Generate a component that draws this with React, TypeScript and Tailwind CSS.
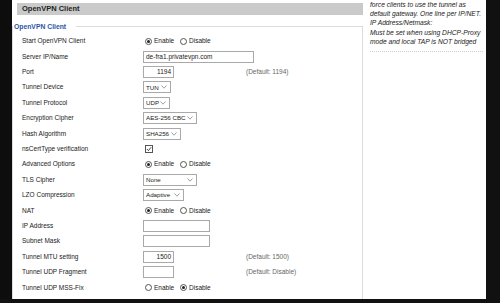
import type { ReactNode } from 'react'

function Radio({ checked }: { checked?: boolean }) {
  return (
    <span className="inline-flex h-[7px] w-[7px] items-center justify-center rounded-full border border-[#555] bg-white">
      {checked && <span className="h-[3px] w-[3px] rounded-full bg-[#222]" />}
    </span>
  )
}

function RadioPair({ on }: { on: boolean }) {
  return (
    <div className="flex items-center pl-[2px]">
      <Radio checked={on} />
      <span className="ml-[2px] w-[26px]">Enable</span>
      <Radio checked={!on} />
      <span className="ml-[2px]">Disable</span>
    </div>
  )
}

function Input({ w, value, right }: { w: string; value?: string; right?: boolean }) {
  return (
    <div
      className={`flex h-[12px] items-center whitespace-nowrap border border-[#a9a9a9] bg-white px-[2px] ${w} ${
        right ? 'justify-end' : ''
      }`}
    >
      {value}
    </div>
  )
}

function Select({ w, value }: { w: string; value: string }) {
  return (
    <div
      className={`flex h-[12px] items-center justify-between overflow-hidden whitespace-nowrap border border-[#a9a9a9] bg-white pl-[2px] pr-[3px] ${w}`}
    >
      <span className="text-[6.2px]">{value}</span>
      <svg width="6" height="4" viewBox="0 0 6 4" className="shrink-0">
        <polyline points="0.5,0.5 3,3.2 5.5,0.5" fill="none" stroke="#888" strokeWidth="0.8" />
      </svg>
    </div>
  )
}

function Checkbox() {
  return (
    <div className="ml-[2px] flex h-[8px] w-[8px] items-center justify-center border border-[#555] bg-white">
      <svg width="6" height="6" viewBox="0 0 6 6">
        <polyline points="0.8,3 2.4,4.6 5.2,1.2" fill="none" stroke="#333" strokeWidth="0.9" />
      </svg>
    </div>
  )
}

type Row = { label: string; control: ReactNode; note?: string }

const rows: Row[] = [
  { label: 'Start OpenVPN Client', control: <RadioPair on /> },
  { label: 'Server IP/Name', control: <Input w="w-[111px]" value="de-fra1.privatevpn.com" /> },
  { label: 'Port', control: <Input w="w-[31px]" value="1194" right />, note: '(Default: 1194)' },
  { label: 'Tunnel Device', control: <Select w="w-[28px]" value="TUN" /> },
  { label: 'Tunnel Protocol', control: <Select w="w-[27px]" value="UDP" /> },
  { label: 'Encryption Cipher', control: <Select w="w-[54px]" value="AES-256 CBC" /> },
  { label: 'Hash Algorithm', control: <Select w="w-[38px]" value="SHA256" /> },
  { label: 'nsCertType verification', control: <Checkbox /> },
  { label: 'Advanced Options', control: <RadioPair on /> },
  { label: 'TLS Cipher', control: <Select w="w-[54px]" value="None" /> },
  { label: 'LZO Compression', control: <Select w="w-[41px]" value="Adaptive" /> },
  { label: 'NAT', control: <RadioPair on /> },
  { label: 'IP Address', control: <Input w="w-[67px]" /> },
  { label: 'Subnet Mask', control: <Input w="w-[67px]" /> },
  { label: 'Tunnel MTU setting', control: <Input w="w-[31px]" value="1500" right />, note: '(Default: 1500)' },
  { label: 'Tunnel UDP Fragment', control: <Input w="w-[31px]" />, note: '(Default: Disable)' },
  { label: 'Tunnel UDP MSS-Fix', control: <RadioPair on={false} /> },
]

export default function App() {
  return (
    <div
      className="flex h-[303px] w-[500px] flex-col overflow-hidden bg-[#111] text-[6.5px] text-[#222]"
      style={{ fontFamily: '"Liberation Sans", Arial, sans-serif' }}
    >
      <div className="flex h-[299px]">
        <div className="w-[12px] bg-[#0d0d0d]" />
        <div className="flex w-[474px] bg-white">
          {/* main settings column */}
          <div className="flex w-[351px] flex-col">
            <div className="ml-[5px] mt-[3px] flex h-[12px] items-center bg-[#cacaca] pl-[5px] text-[7.5px] font-bold text-[#222]">
              OpenVPN Client
            </div>
            <fieldset className="mt-[7px] flex-1 border border-b-0 border-[#dcdcdc] pl-[9px]">
              <legend className="-ml-[9px] pl-[1px] pr-[10px] text-[6.8px] font-bold leading-[9px] text-[#2a55a8]">
                OpenVPN Client
              </legend>
              <div className="mt-[2.5px] flex flex-col">
                {rows.map((r) => (
                  <div key={r.label} className="flex h-[15.4px] items-center whitespace-nowrap">
                    <div className="w-[121px] shrink-0">{r.label}</div>
                    <div className="w-[103px] shrink-0">{r.control}</div>
                    {r.note && <div className="text-[#666]">{r.note}</div>}
                  </div>
                ))}
              </div>
            </fieldset>
          </div>
          {/* help column */}
          <div className="w-[123px] pl-[7px] pr-[3px]">
            <div className="whitespace-nowrap text-[6.7px] italic leading-[9.2px] text-[#222]">
              <div>force clients to use the tunnel as</div>
              <div>default gateway. One line per IP/NET.</div>
              <div>IP Address/Netmask:</div>
              <div>Must be set when using DHCP-Proxy</div>
              <div>mode and local TAP is NOT bridged</div>
            </div>
            <div className="mt-[5px] border-t border-dotted border-[#cfcfcf]" />
          </div>
        </div>
        <div className="flex-1 bg-[#111]" />
      </div>
    </div>
  )
}
